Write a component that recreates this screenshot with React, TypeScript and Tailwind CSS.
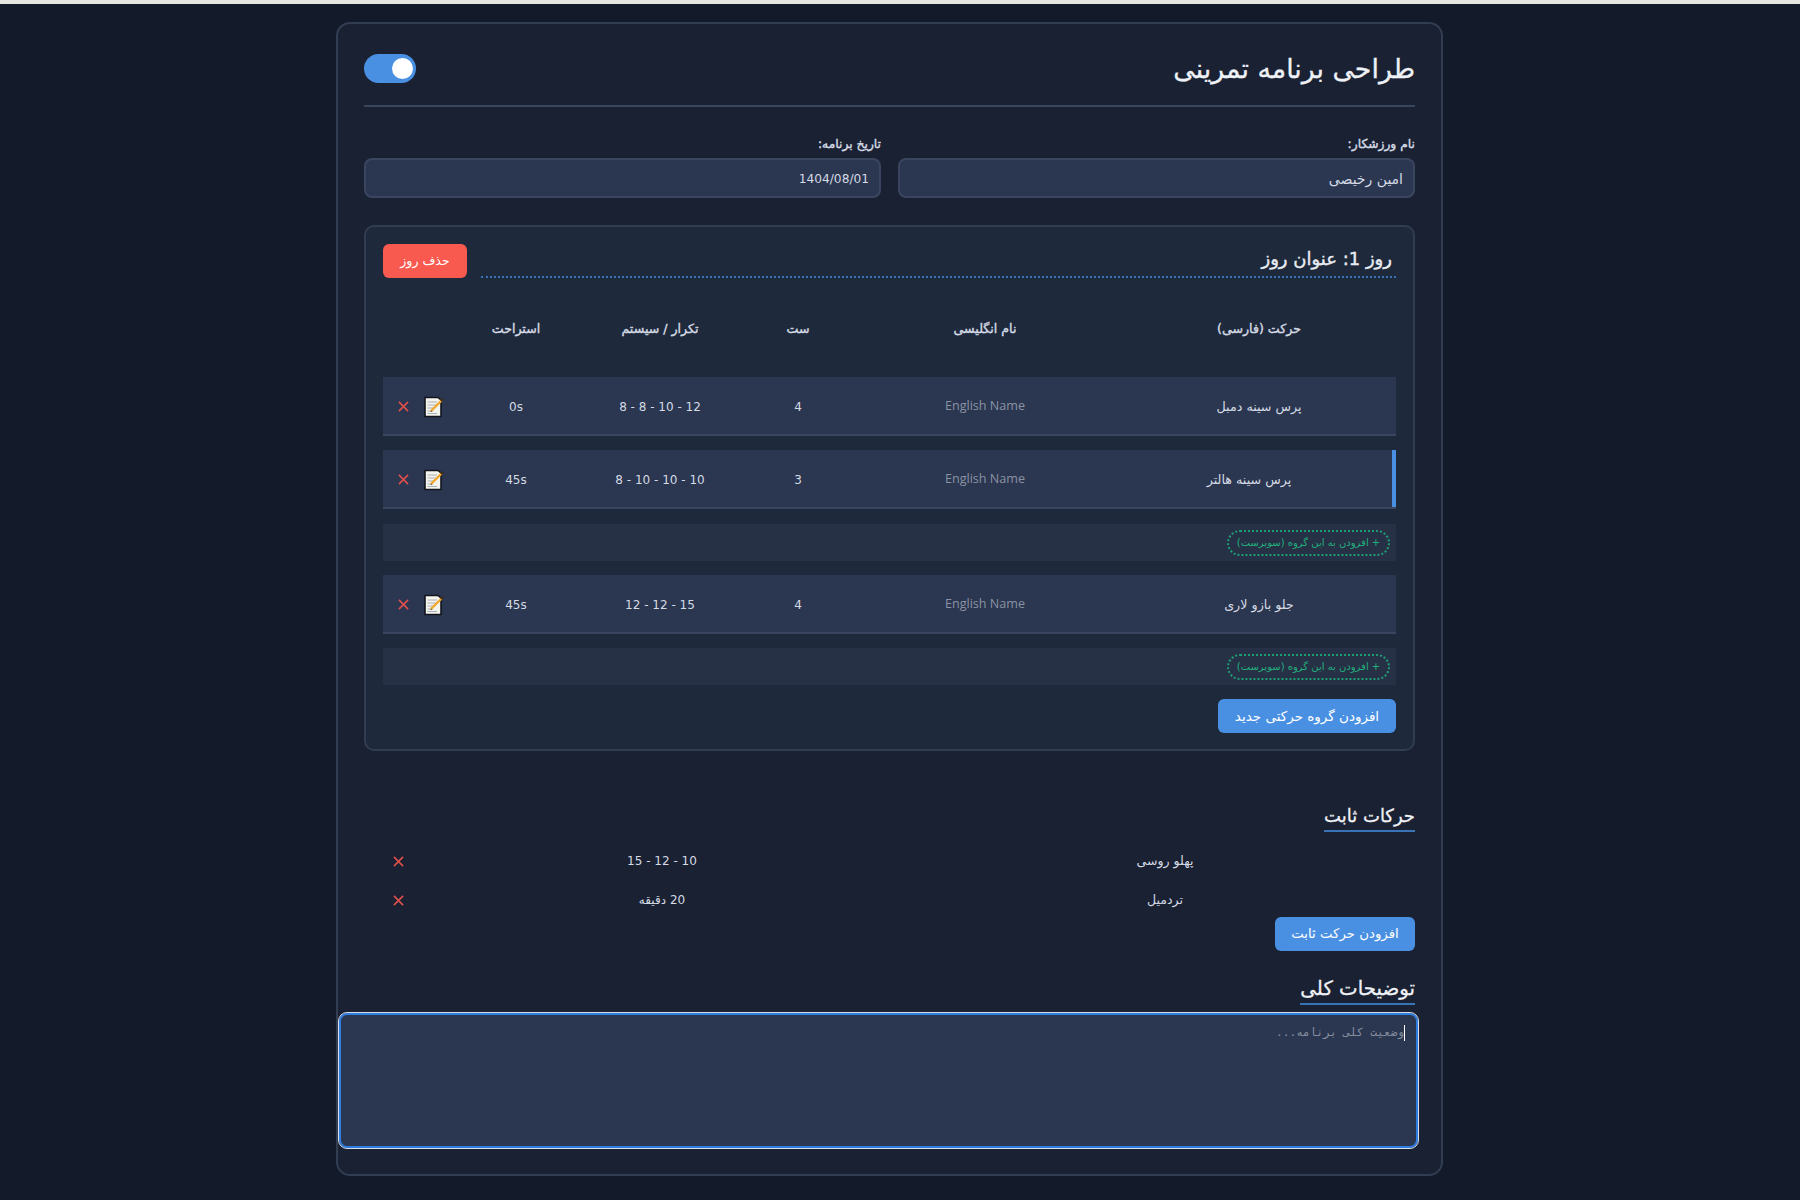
import React from "react";

const font = { fontFamily: '"DejaVu Sans", sans-serif' };

function XIcon({ className = "" }: { className?: string }) {
  return (
    <svg width="11" height="11" viewBox="0 0 12 12" className={className} fill="none">
      <path d="M1 1 L11 11 M11 1 L1 11" stroke="#e0504a" strokeWidth="1.7" />
    </svg>
  );
}

function MemoIcon() {
  return (
    <svg width="22" height="22" viewBox="0 0 22 22">
      <path d="M2 1.5 H15 L18 4 V20.5 H2 Z" fill="#f4f4ee" stroke="#11151c" strokeWidth="1.6" strokeLinejoin="round" />
      <path d="M4.5 6 H14 M4.5 9 H14 M4.5 12 H12 M4.5 15 H10 M4.5 17.5 H14" stroke="#a9aeb5" strokeWidth="1.2" />
      <path d="M8 15 L19 4" stroke="#f2a92c" strokeWidth="2.4" />
      <path d="M18 5 L20 3" stroke="#3a2a18" strokeWidth="2.4" />
      <path d="M8.6 14.4 L7.2 16 L9 15.4" fill="#333" />
    </svg>
  );
}

const cols = "grid grid-cols-[274px_274px_100px_176px_112px_77px] items-center text-center";

function ExerciseRow({ name, sets, reps, rest, accent }: { name: string; sets: string; reps: string; rest: string; accent?: boolean }) {
  return (
    <div className={`${cols} relative h-[59px] pt-[2px] bg-[#2b3650] border-b-2 border-[#3a4660] text-[#d5dbe5]`}>
      {accent && <span className="absolute right-0 top-0 bottom-0 w-[4px] bg-[#4a90e2]" />}
      <div className={`text-[12.7px] ${accent ? "pr-[20px]" : ""}`}>{name}</div>
      <div className="text-[#8a93a3] text-[12.6px]" dir="ltr" style={{ fontFamily: '"Open Sans", sans-serif' }}>English Name</div>
      <div className="text-[12px]">{sets}</div>
      <div className="text-[12px]">{reps}</div>
      <div className="text-[12px]" dir="ltr">{rest}</div>
      <div className="flex items-center justify-center gap-[14px]" dir="rtl">
        <MemoIcon />
        <XIcon />
      </div>
    </div>
  );
}

function SupersetRow() {
  return (
    <div className="flex items-center h-[37px] bg-[#263146] pr-[6px]">
      <button className="h-[26px] w-[163px] rounded-full border-2 border-dotted border-[#1f9e76] text-[10px] text-[#22b07d] text-center">
        + افزودن به این گروه (سوپرست)
      </button>
    </div>
  );
}

function FixedRow({ name, value, mt }: { name: string; value: string; mt: string }) {
  return (
    <div className={`grid grid-cols-[500px_506px_44px] items-center h-[28px] text-[12.5px] text-[#d5dbe5] text-center ${mt}`}>
      <div>{name}</div>
      <div className="text-[12px]">{value}</div>
      <div className="flex justify-start pr-[5px]"><XIcon /></div>
    </div>
  );
}

function SectionTitle({ children, size, className = "" }: { children: React.ReactNode; size: string; className?: string }) {
  return (
    <div className={`flex justify-start ${className}`}>
      <h2 className={`${size} leading-[26px] pb-[1px] border-b-2 border-[#3873b8] text-[#eef1f6] font-normal [-webkit-text-stroke:0.3px]`}>{children}</h2>
    </div>
  );
}

export default function App() {
  return (
    <div className="min-h-[1200px] bg-[#131a29]" style={font}>
      <div className="h-[4px] bg-[#e6e7de]" />
      <div dir="rtl" className="ml-[336px] mt-[18px] w-[1107px] h-[1154px] rounded-[14px] border-2 border-[#323d52] bg-[#1a2133] px-[26px]">
        <header className="flex items-center justify-between h-[83px] border-b-2 border-[#3a465b] pt-[9px]">
          <h1 className="text-[26.8px] font-normal text-[#eef1f6] [-webkit-text-stroke:0.3px]">طراحی برنامه تمرینی</h1>
          <div dir="ltr" className="w-[52px] h-[29px] mb-[2px] rounded-full bg-[#4a90e2] flex items-center justify-end pr-[3px]">
            <span className="w-[21px] h-[21px] rounded-full bg-white" />
          </div>
        </header>

        <div className="grid grid-cols-2 gap-[17px] mt-[27px]">
          <label className="block">
            <span className="block text-[12.3px] text-[#d5dbe5] leading-[20px] mb-[4px] [-webkit-text-stroke:0.4px]">نام ورزشکار:</span>
            <div className="h-[40px] flex items-center rounded-[8px] border-2 border-[#3a4660] bg-[#2b3650] px-[10px] pt-[3px] text-[14px] text-[#d5dbe5]">امین رخیصی</div>
          </label>
          <label className="block">
            <span className="block text-[12.3px] text-[#d5dbe5] leading-[20px] mb-[4px] [-webkit-text-stroke:0.4px]">تاریخ برنامه:</span>
            <div className="h-[40px] flex items-center rounded-[8px] border-2 border-[#3a4660] bg-[#2b3650] px-[10px] pt-[2px] text-[12.2px] text-[#d5dbe5]">1404/08/01</div>
          </label>
        </div>

        <section className="mt-[27px] h-[526px] rounded-[10px] border-2 border-[#323d52] bg-[#1e293b] p-[17px]">
          <div className="flex items-start justify-between h-[34px]">
            <div className="flex-1 ml-[14px] h-[34px] border-b-2 border-dotted border-[#3873b8] pr-[4px]">
              <h3 className="text-[18px] leading-[30px] font-normal text-[#e8ecf2] [-webkit-text-stroke:0.4px]">روز 1: عنوان روز</h3>
            </div>
            <button className="w-[84px] h-[34px] rounded-[6px] bg-[#f95a50] text-white text-[12.5px]">حذف روز</button>
          </div>

          <div className={`${cols} h-[99px] pt-[4px] text-[12.6px] text-[#d5dbe5] [-webkit-text-stroke:0.4px]`}>
            <div>حرکت (فارسی)</div>
            <div>نام انگلیسی</div>
            <div>ست</div>
            <div>تکرار / سیستم</div>
            <div>استراحت</div>
            <div />
          </div>

          <ExerciseRow name="پرس سینه دمبل" sets="4" reps="12 - 10 - 8 - 8" rest="0s" />
          <div className="mt-[14px]"><ExerciseRow name="پرس سینه هالتر" sets="3" reps="10 - 10 - 10 - 8" rest="45s" accent /></div>
          <div className="mt-[15px]"><SupersetRow /></div>
          <div className="mt-[14px]"><ExerciseRow name="جلو بازو لاری" sets="4" reps="15 - 12 - 12" rest="45s" /></div>
          <div className="mt-[14px]"><SupersetRow /></div>
          <button className="block mt-[14px] w-[178px] h-[34px] rounded-[6px] bg-[#4a90e2] text-white text-[13.5px]">افزودن گروه حرکتی جدید</button>
        </section>

        <SectionTitle size="text-[18px]" className="mt-[52px]">حرکات ثابت</SectionTitle>
        <FixedRow name="پهلو روسی" value="10 - 12 - 15" mt="mt-[15px]" />
        <FixedRow name="تردمیل" value="20 دقیقه" mt="mt-[11px]" />
        <button className="block mt-[3px] w-[140px] h-[34px] rounded-[6px] bg-[#4a90e2] text-white text-[13.3px]">افزودن حرکت ثابت</button>

        <SectionTitle size="text-[19.8px]" className="mt-[25px]">توضیحات کلی</SectionTitle>
        <div className="relative mt-[8px] mr-[-3px] ml-[-26px] w-[1079px]">
          <textarea
            placeholder="وضعیت کلی برنامه..."
            style={{ fontFamily: '"DejaVu Sans Mono", monospace' }}
            className="block w-full h-[135px] resize-none rounded-[8px] bg-[#2b3650] border-2 border-[#2f7de0] outline outline-1 outline-[#d8dde5] px-[12px] py-[10px] text-[11.2px] text-[#d5dbe5] placeholder:text-[#858e9e]"
          />
          <span className="absolute right-[13px] top-[12px] h-[16px] w-[1px] bg-white" />
        </div>
      </div>
    </div>
  );
}
